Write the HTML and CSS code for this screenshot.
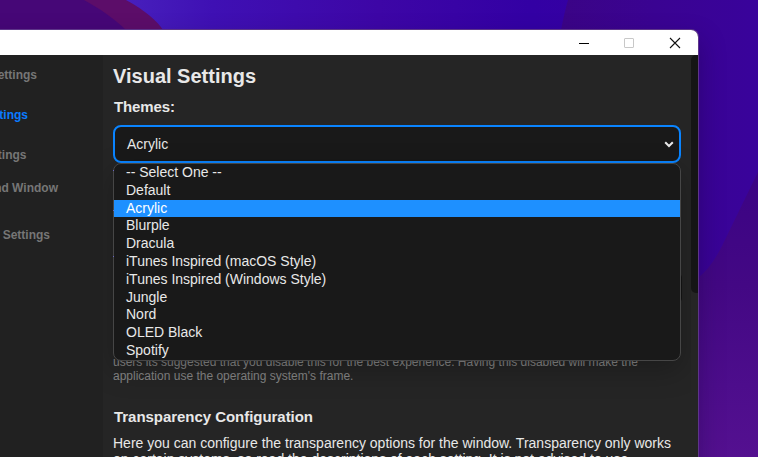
FILE: index.html
```
<!DOCTYPE html>
<html lang="en">
<head>
<meta charset="utf-8">
<title>Visual Settings</title>
<link rel="stylesheet" href="styles.css">
</head>
<body>
<svg class="wallpaper" viewBox="0 0 758 457" preserveAspectRatio="none" aria-hidden="true">
  <defs>
    <linearGradient id="top" x1="0" x2="1" y1="0" y2="0">
      <stop offset=".17" stop-color="#471fbc"/>
      <stop offset=".28" stop-color="#3f10b4"/>
      <stop offset=".5" stop-color="#3d06a6"/>
      <stop offset=".7" stop-color="#3300a4"/>
      <stop offset="1" stop-color="#3902a0"/>
    </linearGradient>
    <linearGradient id="side" x1="0" x2="1" y1="0" y2="0">
      <stop offset=".2" stop-color="#3b0485"/>
      <stop offset=".6" stop-color="#3a0392"/>
      <stop offset="1" stop-color="#39039b"/>
    </linearGradient>
    <linearGradient id="low" x1="0" x2="0" y1="0" y2="1">
      <stop offset="0" stop-color="#3b0384"/>
      <stop offset=".4" stop-color="#430884"/>
      <stop offset=".75" stop-color="#4d0d8c"/>
      <stop offset="1" stop-color="#541090"/>
    </linearGradient>
  </defs>
  <rect width="758" height="457" fill="url(#top)"/>
  <path d="M568 0H758V457H500Q550 60 568 0Z" fill="url(#side)"/>
  <path d="M758 172L722 246Q711 268 698 278V457H758Z" fill="url(#low)"/>
  <path d="M0 0H126C146 11 157 21 163 30H0Z" fill="#5c0d69"/>
  <path d="M0 0H84C99 8 116 20 126 30H0Z" fill="#460777"/>
</svg>

<main class="window">
  <header class="titlebar">
    <svg class="control" viewBox="0 0 12 12"><path d="M1 6.5H11" stroke="#000"/></svg>
    <svg class="control" viewBox="0 0 12 12"><rect x="1.5" y="1.5" width="9" height="9" rx=".5" fill="none" stroke="#c8c8c8"/></svg>
    <svg class="control" viewBox="0 0 12 12"><path d="M1 1L11 11M11 1L1 11" stroke="#111" stroke-width="1.1"/></svg>
  </header>
  <div class="body">
    <nav class="sidebar">
      <a class="nav general">Settings</a>
      <a class="nav visual">Settings</a>
      <a class="nav audio">Settings</a>
      <a class="nav behaviour">and Window</a>
      <a class="nav other">Settings</a>
    </nav>
    <section class="content">
      <h1>Visual Settings</h1>
      <h2 class="label">Themes:</h2>
      <div class="picker">
        <div class="select"><span>Acrylic</span>
          <svg class="chevron" viewBox="0 0 10 7"><path d="M1.2 1.2L5 5L8.8 1.2" fill="none" stroke="#e8e8e8" stroke-width="2"/></svg>
        </div>
        <ul class="menu">
          <li>-- Select One --</li>
          <li>Default</li>
          <li class="active">Acrylic</li>
          <li>Blurple</li>
          <li>Dracula</li>
          <li>iTunes Inspired (macOS Style)</li>
          <li>iTunes Inspired (Windows Style)</li>
          <li>Jungle</li>
          <li>Nord</li>
          <li>OLED Black</li>
          <li>Spotify</li>
        </ul>
        <i class="tick first"></i><i class="tick second"></i><i class="tick third"></i>
      </div>
      <div class="field"></div>
      <p class="hint">users its suggested that you disable this for the best experience. Having this disabled will make the<br>application use the operating system's frame.</p>
      <h2 class="section">Transparency Configuration</h2>
      <p class="text">Here you can configure the transparency options for the window. Transparency only works<br>on certain systems, so read the descriptions of each setting. It is not advised to use</p>
    </section>
    <div class="scroll"><div class="thumb"></div></div>
  </div>
</main>
</body>
</html>
```
FILE: styles.css
```
* { box-sizing: border-box; }
html, body { height: 100%; }
body {
  display: flow-root;
  margin: 0;
  overflow: hidden;
  background: #3902a0;
  color: #e8e8e8;
  font-family: "Liberation Sans", Arial, sans-serif;
  position: relative;
}
.wallpaper { position: absolute; inset: 0; width: 100%; height: 100%; }
h1, h2, p, ul { margin: 0; padding: 0; }
body::before {
  content: "";
  position: absolute;
  z-index: 1;
  left: -40px;
  top: 29px;
  width: 739px;
  height: 480px;
  border-radius: 8px;
  box-shadow: 0 12px 26px rgba(20, 0, 50, .35);
}
.window {
  position: relative;
  z-index: 2;
  width: 699px;
  height: 428px;
  margin-top: 29px;
  border: 1px solid #5d3589;
  border-width: 1px 1px 0 0;
  border-radius: 0 8px 0 0;
  overflow: hidden;
  background: #252525;
  background-clip: padding-box;
}
.titlebar {
  height: 25px;
  background: #fff;
  display: flex;
  justify-content: flex-end;
  align-items: center;
  gap: 33px;
  padding-right: 17px;
}
.control { width: 12px; height: 12px; display: block; }
.control:last-child { margin-left: 1px; }
.body { display: flex; height: 402px; }
.sidebar {
  width: 103px;
  flex: none;
  background: #212121;
  overflow: hidden;
  padding-top: 12px;
}
.nav {
  display: flex;
  justify-content: flex-end;
  height: 16px;
  line-height: 16px;
  font-size: 12px;
  font-weight: 700;
  color: #767676;
  white-space: nowrap;
}
.general { width: 37px; }
.visual { width: 28px; margin-top: 24px; color: #0a7cff; }
.audio { width: 26.5px; margin-top: 24px; }
.behaviour { width: 58px; margin-top: 17px; }
.other { width: 50px; margin-top: 31px; }
.content { flex: none; width: 588px; padding: 9px 0 0 10px; overflow: hidden; }
h1 { font-size: 20px; line-height: 24px; }
h2 { font-size: 15px; line-height: 18px; padding-left: 1px; letter-spacing: -.04px; }
.label { margin-top: 10px; letter-spacing: -.12px; }
.picker { position: relative; z-index: 2; width: 568px; margin-top: 9px; }
.select {
  height: 38px;
  border: 2px solid #0a84ff;
  border-radius: 8px;
  background: #191919;
  padding: 0 5px 0 12px;
  display: flex;
  align-items: center;
  justify-content: space-between;
  font-size: 14px;
}
.chevron { width: 10px; height: 7px; }
.menu {
  position: absolute;
  top: 38px;
  left: 0;
  width: 568px;
  height: 198px;
  list-style: none;
  background: #191919;
  border: 1px solid #464646;
  border-radius: 8px;
  font-size: 14px;
  box-shadow: 0 9px 28px rgba(0, 0, 0, .25);
}
.menu li { height: 17.8px; line-height: 17.8px; padding-left: 12px; }
.menu .active { background: #1e90ff; color: #fff; }
.tick {
  position: absolute;
  left: 0;
  width: 1px;
  height: 1px;
  background: #6a68c0;
}
.first { top: 45px; }
.second { top: 85px; }
.third { top: 131px; }
.field {
  width: 569px;
  height: 28px;
  margin-top: 111px;
  border-radius: 4px;
  background: #151515;
}
.hint { margin-top: 53px; font-size: 12px; line-height: 14px; color: #858585; white-space: nowrap; }
.section { margin-top: 25px; }
.text { margin-top: 9px; font-size: 14px; line-height: 16px; white-space: nowrap; }
.scroll { width: 7px; flex: none; }
.thumb { height: 238px; border-radius: 5px 0 0 5px; background: #151515; }
```
